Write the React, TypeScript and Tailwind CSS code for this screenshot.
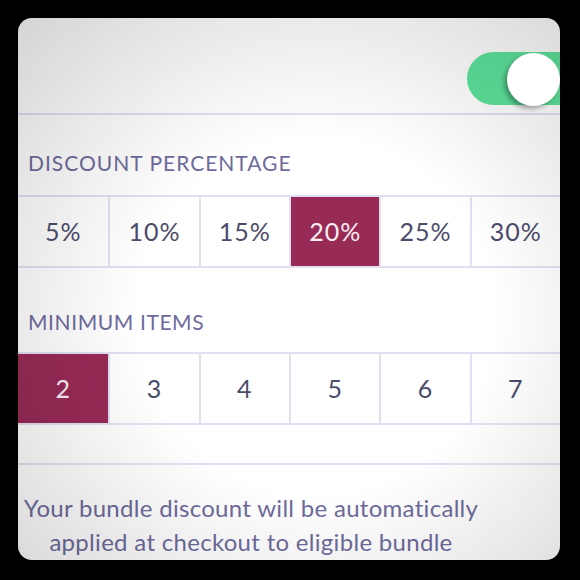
import { useState } from "react";

const percents = ["5%", "10%", "15%", "20%", "25%", "30%"];
const items = ["2", "3", "4", "5", "6", "7"];

const font = { fontFamily: "Lato, 'Open Sans', sans-serif" };

interface OptionRowProps {
  options: string[];
  selected: string;
  onSelect: (v: string) => void;
}

const OptionRow = ({ options, selected, onSelect }: OptionRowProps) => {
  return (
    <div className="grid grid-cols-6 h-[73px] border-y-2 border-[#e2dff2]">
      {options.map((o, i) => (
        <button
          key={o}
          onClick={() => onSelect(o)}
          className={
            "flex items-center justify-center text-[25px] tracking-[1px] " +
            (i > 0 ? "border-l-2 border-[#e2dff2] " : "") +
            (o === selected ? "bg-[#982a56] text-[#fbeef4] border-[#982a56]" : "text-[#4c4b6a]")
          }
        >
          {o}
        </button>
      ))}
    </div>
  );
};

export default function App() {
  const [pct, setPct] = useState("20%");
  const [min, setMin] = useState("2");

  return (
    <div className="w-[580px] h-[580px] bg-black pl-[18px] pt-[18px]" style={font}>
      <div className="relative w-[542px] h-[542px] overflow-hidden rounded-[14px] bg-white">
        <div className="h-[97px] border-b-2 border-[#e2dff2] flex justify-end pt-[34px]">
          <div className="relative w-[93px] h-[53px] rounded-l-full bg-[#5de39b]">
            <div className="absolute z-10 left-[40px] top-[1px] w-[53px] h-[53px] rounded-full bg-white shadow-[-3px_3px_4px_rgba(0,0,0,0.3)]" />
          </div>
        </div>

        <div className="pt-[36px] pb-[20px] px-[10px] text-[21px] leading-[24px] text-[#6e6b9c] tracking-[1px]">
          DISCOUNT PERCENTAGE
        </div>
        <OptionRow options={percents} selected={pct} onSelect={setPct} />

        <div className="pt-[42px] pb-[18px] px-[10px] text-[21px] leading-[24px] text-[#6e6b9c] tracking-[0.6px]">
          MINIMUM ITEMS
        </div>
        <OptionRow options={items} selected={min} onSelect={setMin} />

        <div className="mt-[38px] border-t-2 border-[#e2dff2] pt-[26px] pr-[76px] text-center text-[24px] leading-[34px] text-[#6e6b9c] tracking-[0.3px]">
          Your bundle discount will be automatically applied at checkout to eligible bundle
        </div>

        <div className="pointer-events-none absolute inset-0 bg-[radial-gradient(ellipse_at_55%_55%,rgba(0,0,0,0)_42%,rgba(0,0,0,0.17)_100%)]" />
      </div>
    </div>
  );
}
